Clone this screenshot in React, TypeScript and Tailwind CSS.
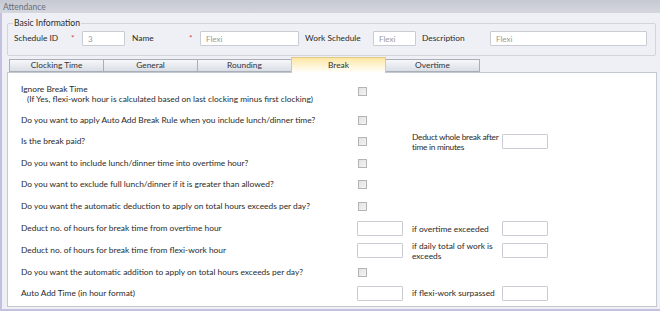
import React from 'react';

const font = { fontFamily: 'Lato, "Open Sans", sans-serif' };

const Input = ({ value = '', className = '' }: { value?: string; className?: string }) => (
  <div
    className={`h-[15px] bg-white border border-[#c9ccd3] rounded-[1px] flex items-center px-[5px] text-[8px] text-[#9a9a9a] ${className}`}
  >
    {value}
  </div>
);

const Check = () => (
  <div className="w-[9px] h-[9px] border border-[#b4b4b4] bg-gradient-to-br from-[#e2e2e2] to-[#f4f4f4]" />
);

interface Row {
  h: string;
  label: React.ReactNode;
  control: 'check' | 'input';
  label2?: React.ReactNode;
  input2?: boolean;
}

const rows: Row[] = [
  {
    h: 'h-[21px]',
    label: 'Do you want to apply Auto Add Break Rule when you include lunch/dinner time?',
    control: 'check',
  },
  {
    h: 'h-[21px]',
    label: 'Is the break paid?',
    control: 'check',
    label2: (
      <span className="tracking-[-0.3px]">
        Deduct whole break after
        <br />
        time in minutes
      </span>
    ),
    input2: true,
  },
  { h: 'h-[22px]', label: 'Do you want to include lunch/dinner time into overtime hour?', control: 'check' },
  { h: 'h-[21px]', label: 'Do you want to exclude full lunch/dinner if it is greater than allowed?', control: 'check' },
  { h: 'h-[22px]', label: 'Do you want the automatic deduction to apply on total hours exceeds per day?', control: 'check' },
  {
    h: 'h-[23px]',
    label: 'Deduct no. of hours for break time from overtime hour',
    control: 'input',
    label2: 'if overtime exceeded',
    input2: true,
  },
  {
    h: 'h-[21px]',
    label: 'Deduct no. of hours for break time from flexi-work hour',
    control: 'input',
    label2: (
      <>
        if daily total of work is
        <br />
        exceeds
      </>
    ),
    input2: true,
  },
  { h: 'h-[22px]', label: 'Do you want the automatic addition to apply on total hours exceeds per day?', control: 'check' },
  {
    h: 'h-[20px]',
    label: 'Auto Add Time (in hour format)',
    control: 'input',
    label2: 'if flexi-work surpassed',
    input2: true,
  },
];

const tabs = ['Clocking Time', 'General', 'Rounding', 'Break', 'Overtime'];

export default function App() {
  return (
    <div className="w-[660px] h-[311px] overflow-hidden bg-[#eef0f5] text-[8.4px] text-[#2a2a2a]" style={font}>
      <div className="h-[13px] bg-gradient-to-b from-[#c6c9d1] to-[#d4d7de] flex items-center pl-[3px] pt-px text-[8.5px] text-[#6a6d76]">
        Attendance
      </div>
      <div className="h-[298px] border-l-2 border-b-2 border-[#c3c1df] pt-[5px]">
        <fieldset className="ml-[5px] mr-[4px] h-[38px] border border-[#d2d5dc] rounded-[2px]">
          <legend className="ml-[5px] px-[1px] text-[8.6px] leading-[10px] text-[#2a2a2a]">Basic Information</legend>
          <div className="flex items-center pl-[6px] mt-[3px]">
            <span className="w-[57px]">Schedule ID</span>
            <span className="w-[11px] text-[#e23b3b]">*</span>
            <Input value="3" className="w-[43px]" />
            <span className="w-[57px] ml-[7px]">Name</span>
            <span className="w-[11px] text-[#e23b3b]">*</span>
            <Input value="Flexi" className="w-[99px]" />
            <span className="w-[68px] ml-[6px]">Work Schedule</span>
            <Input value="Flexi" className="w-[43px]" />
            <span className="w-[68px] ml-[6px]">Description</span>
            <Input value="Flexi" className="w-[157px]" />
          </div>
        </fieldset>

        <div className="ml-[5px] mr-[3px]">
          <div className="flex items-end h-[16px] pl-[2px]">
            {tabs.map((t) =>
              t === 'Break' ? (
                <div
                  key={t}
                  className="w-[95px] h-[16px] -ml-px -mb-px relative z-10 border border-b-0 border-[#e2c983] bg-gradient-to-b from-[#fde7a2] to-white flex items-center justify-center text-[#333]"
                >
                  {t}
                </div>
              ) : (
                <div
                  key={t}
                  className="w-[95px] h-[13px] border border-[#a9aeb9] -ml-px first:ml-0 bg-gradient-to-b from-[#f6f7f9] to-[#dadee6] flex items-center justify-center text-[#333]"
                >
                  {t}
                </div>
              )
            )}
          </div>

          <div className="h-[235px] bg-white border border-[#c4c8d0] pt-[11px] pl-[13px]">
            <div className="flex h-[26px]">
              <div className="w-[336px] leading-[10px]">
                <div>Ignore Break Time</div>
                <div className="pl-[6px]">(If Yes, flexi-work hour is calculated based on last clocking minus first clocking)</div>
              </div>
              <div className="pt-[3px] pl-[1px]">
                <Check />
              </div>
            </div>
            {rows.map((r, i) => (
              <div key={i} className={`flex items-center ${r.h}`}>
                <div className="w-[336px]">{r.label}</div>
                <div className="w-[55px]">
                  {r.control === 'check' ? (
                    <div className="pl-[1px]">
                      <Check />
                    </div>
                  ) : (
                    <Input className="w-[46px]" />
                  )}
                </div>
                {r.label2 && <div className="w-[90px] leading-[10px] whitespace-nowrap">{r.label2}</div>}
                {r.input2 && <Input className="w-[46px]" />}
              </div>
            ))}
          </div>
        </div>
      </div>
    </div>
  );
}
